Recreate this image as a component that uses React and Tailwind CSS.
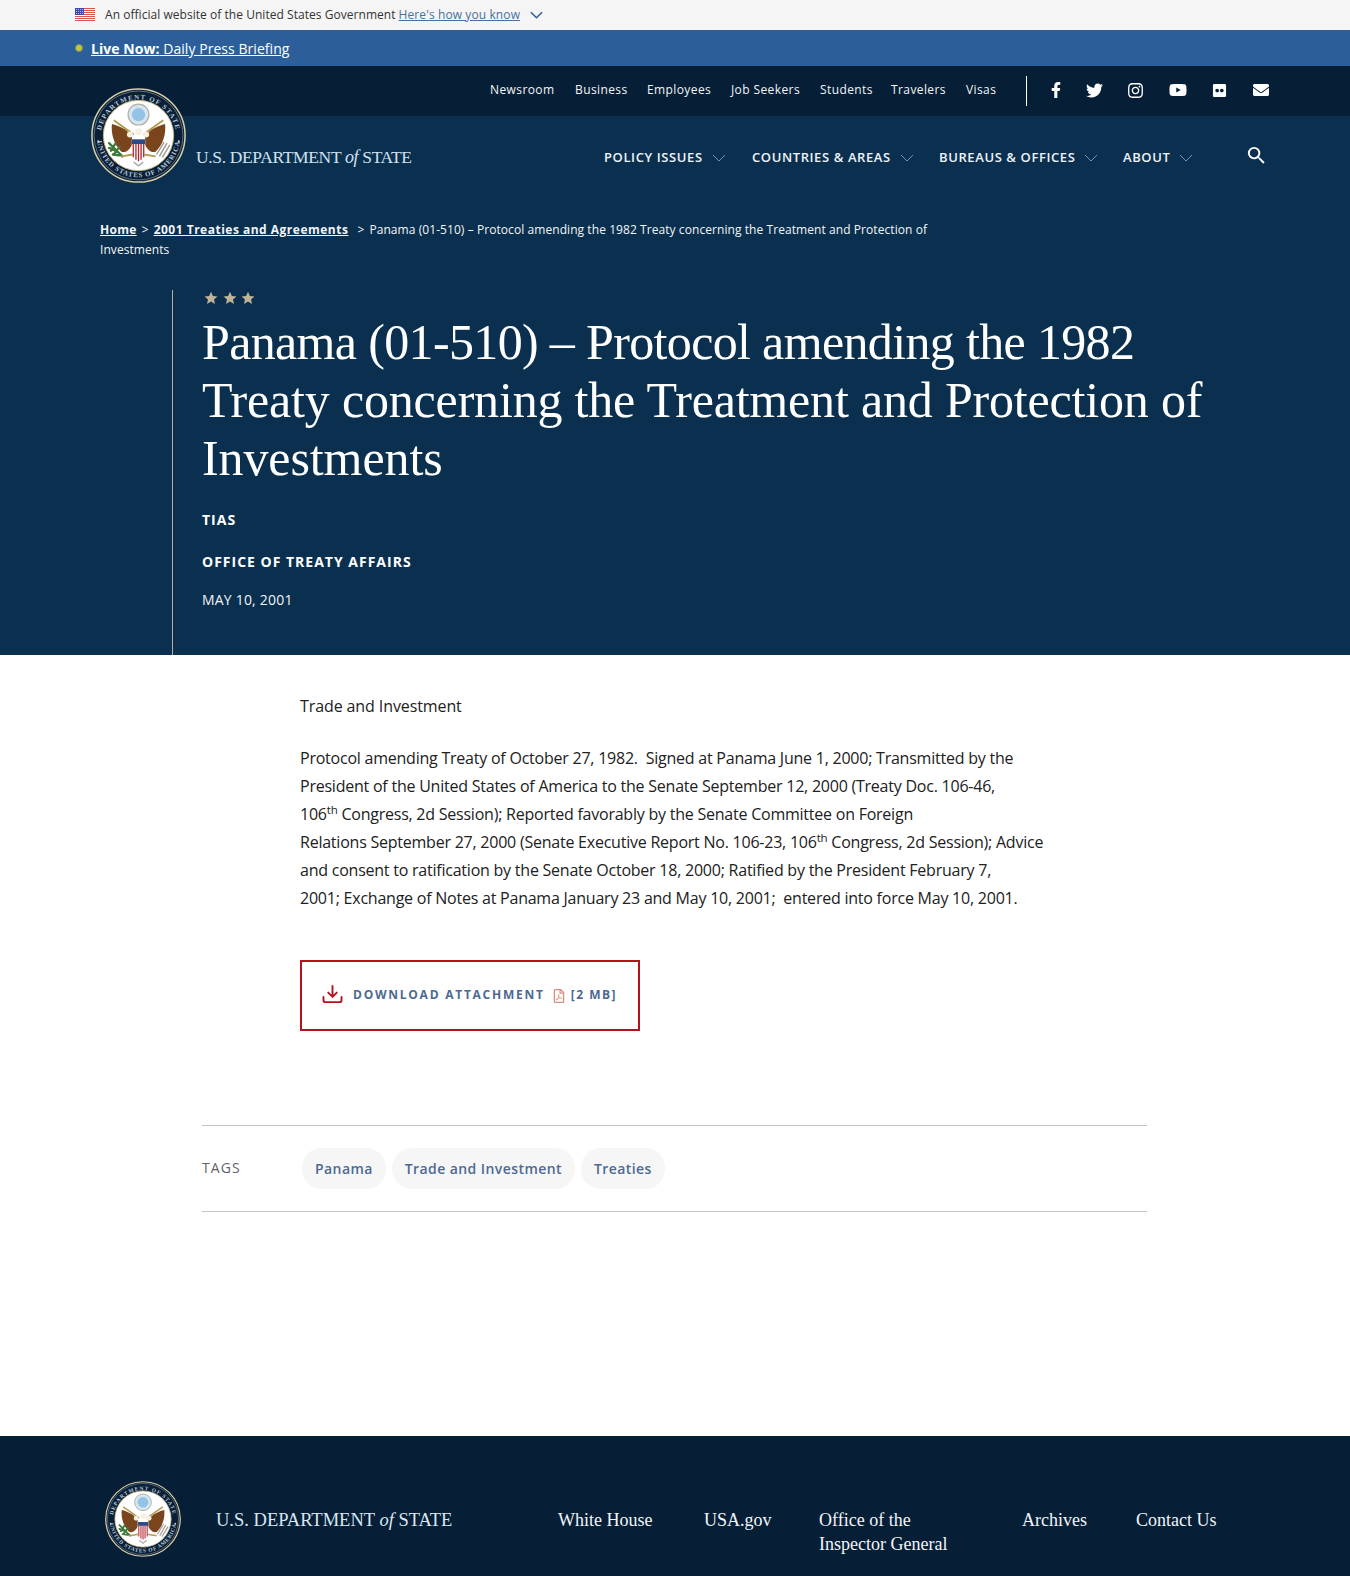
import React, { useId } from "react";
import { FaFacebookF, FaTwitter, FaInstagram, FaYoutube, FaFlickr, FaEnvelope, FaRegFilePdf } from "react-icons/fa";
import { MdSearch } from "react-icons/md";

const sans = "font-['Open_Sans',sans-serif]";
const serif = "font-['Liberation_Serif',serif]";

function Seal({ className }) {
  const id = useId().replace(/:/g, "");
  return (
    <svg viewBox="0 0 100 100" className={className}>
      <defs>
        <path id={id + "t"} d="M 10 52 A 40 40 0 0 1 90 52" />
        <path id={id + "b"} d="M 6 50 A 44 44 0 0 0 94 50" />
      </defs>
      <circle cx="50" cy="50" r="49" fill="#0a2038" stroke="#d9cfa6" strokeWidth="1.6" />
      <circle cx="50" cy="50" r="46.8" fill="none" stroke="#f4f0dc" strokeWidth="0.4" />
      <circle cx="50" cy="50" r="37" fill="#fff" stroke="#c9b983" strokeWidth="1" />
      <text fontSize="7.2" fontWeight="700" fontFamily="Liberation Serif, serif" fill="#b9c9da" letterSpacing="1.3">
        <textPath href={`#${id}t`} startOffset="50%" textAnchor="middle">DEPARTMENT OF STATE</textPath>
      </text>
      <text fontSize="7.2" fontWeight="700" fontFamily="Liberation Serif, serif" fill="#b9c9da" letterSpacing="0.9">
        <textPath href={`#${id}b`} startOffset="50%" textAnchor="middle">UNITED STATES OF AMERICA</textPath>
      </text>
      <circle cx="7.6" cy="56" r="1.1" fill="#c5d3e2" />
      <circle cx="92.4" cy="56" r="1.1" fill="#c5d3e2" />
      <path d="M24 34 L45 49 M76 34 L55 49" stroke="#b39a4e" strokeWidth="2" />
      <circle cx="50" cy="28" r="11" fill="#d5e5f2" stroke="#aeb0a0" strokeWidth="1.2" />
      <circle cx="50" cy="28" r="7" fill="#94c3e6" />
      <path d="M43 50 C36 43 30 40 22 38 C21 48 24 60 32 67 C37 69 41 64 43 60 Z" fill="#7a451c" />
      <path d="M57 50 C64 43 70 40 78 38 C79 48 76 60 68 67 C63 69 59 64 57 60 Z" fill="#7a451c" />
      <circle cx="41" cy="49" r="3.2" fill="#f5f0e2" />
      <circle cx="58" cy="49" r="3.2" fill="#f5f0e2" />
      <circle cx="50" cy="46" r="3.6" fill="#f5f0e2" />
      <path d="M43 54 H57 V68 C57 73 53 76 50 77 C47 76 43 73 43 68 Z" fill="#fff" />
      <path d="M43 54 H57 V59 H43 Z" fill="#2b4a86" />
      <path d="M44.5 59 V73 M47.3 59 V75.5 M50 59 V77 M52.7 59 V75.5 M55.5 59 V73" stroke="#b3282f" strokeWidth="1.4" />
      <path d="M19 58 L33 72 M21 66 L26 58 M24 70 L30 62 M26 66 L19 63 M30 71 L23 70" stroke="#3f7a3c" strokeWidth="2.4" strokeLinecap="round" />
      <path d="M72 72 L80 58 M69 70 L77 57 M75 73 L83 60" stroke="#9a9a8e" strokeWidth="1.5" />
      <path d="M32 72 L44 70 M68 72 L56 70" stroke="#b49a4d" strokeWidth="2" />
      <path d="M45 78 L50 82 L55 78" stroke="#aaa" strokeWidth="1.5" fill="none" />
    </svg>
  );
}

function Flag() {
  return (
    <svg viewBox="0 0 20 13" className="w-5 h-[13px] shrink-0">
      <rect width="20" height="13" fill="#fff" />
      {[0, 2, 4, 6, 8, 10, 12].map((y) => (
        <rect key={y} y={y} width="20" height="1" fill="#d9534f" />
      ))}
      <rect width="9" height="7" fill="#3a4aa8" />
      <path d="M1 1.5h7M1 3.5h7M1 5.5h7" stroke="#cfd6f0" strokeWidth="0.8" strokeDasharray="1 1" />
    </svg>
  );
}

function Chevron({ className }) {
  return (
    <svg viewBox="0 0 14 8" className={className} fill="none" stroke="currentColor" strokeWidth="1">
      <path d="M1 1l6 6 6-6" />
    </svg>
  );
}

function Stars() {
  return (
    <div className="ml-[2px] flex gap-[4.5px] h-[14px] items-center">
      {[0, 1, 2].map((i) => (
        <svg key={i} viewBox="0 0 20 20" className="w-[14px] h-[14px]" fill="#bfb49a">
          <path d="M10 1l2.7 6 6.5.7-4.9 4.3 1.4 6.4L10 15.1 4.3 18.4l1.4-6.4L.8 7.7 7.3 7z" />
        </svg>
      ))}
    </div>
  );
}

const topLinks = [
  ["Newsroom", "w-[85px]"],
  ["Business", "w-[72px]"],
  ["Employees", "w-[84px]"],
  ["Job Seekers", "w-[89px]"],
  ["Students", "w-[71px]"],
  ["Travelers", "w-[75px]"],
  ["Visas", "w-[60px]"],
];

const socials = [
  [FaFacebookF, "text-[16px]", "w-[35px]"],
  [FaTwitter, "text-[17px]", "w-[42px]"],
  [FaInstagram, "text-[17px]", "w-[41px]"],
  [FaYoutube, "text-[18px]", "w-[43px]"],
  [FaFlickr, "text-[15px]", "w-[41px]"],
  [FaEnvelope, "text-[16px]", "w-[41px]"],
];

const mainNav = [
  ["POLICY ISSUES", "w-[148px]"],
  ["COUNTRIES & AREAS", "w-[187px]"],
  ["BUREAUS & OFFICES", "w-[184px]"],
  ["ABOUT", "w-[100px]"],
];

const footerLinks = [
  ["White House", "w-[146px]"],
  ["USA.gov", "w-[115px]"],
  ["Office of the", "w-[203px]", "Inspector General"],
  ["Archives", "w-[114px]"],
  ["Contact Us", "w-[110px]"],
];

export default function App() {
  return (
    <div className={`${sans} w-[1350px] h-[1576px] flex flex-col bg-white text-[#212121] overflow-hidden`}>
      <div className="h-[30px] bg-[#f5f5f5] flex items-center pl-[75px]">
        <div className="-mt-[2px]"><Flag /></div>
        <span className="ml-[10px] text-[12px] tracking-[0.04px] text-[#333]">An official website of the United States Government</span>
        <a className="ml-[3px] text-[12px] tracking-[0.1px] text-[#4a6f9e] underline">Here's how you know</a>
        <Chevron className="ml-[10px] w-[13px] h-[8px] text-[#2d5f9a] stroke-[1.6]" />
      </div>

      <div className="h-[36px] bg-[#2c5f9a] flex items-center pl-[75px] text-white text-[14px] tracking-[0.05px]">
        <span className="w-[8px] h-[8px] rounded-full bg-[#c9c23c] border border-[#6f9a6a] mr-[8px]" />
        <a className="underline"><b className="font-bold">Live Now:</b> Daily Press Briefing</a>
      </div>

      <div className="relative flex-none h-[589px] bg-[#0b304f] text-white">
        <div className="h-[50px] bg-[#061f36] flex items-center pl-[490px]">
          {topLinks.map(([t, w]) => (
            <a key={t} className={`${w} text-[12px] tracking-[0.4px] text-[#f2f5f8] -mt-[2px]`}>{t}</a>
          ))}
          <span className="w-px h-[30px] bg-white" />
          <div className="ml-[11px] flex items-center -mt-[2px]">
            {socials.map(([Icon, size, w], i) => (
              <span key={i} className={`${w} flex justify-center`}>
                <Icon className={size} />
              </span>
            ))}
          </div>
        </div>

        <div className="absolute left-[91px] top-[22px] w-[95px] h-[95px]"><Seal className="w-full h-full" /></div>

        <div className="h-[83px] flex items-center pl-[196px]">
          <span className={`${serif} w-[408px] text-[17.5px] tracking-[-0.35px] text-[#cfe2f0]`}>
            U.S. DEPARTMENT <i className="text-[18px]">of</i> STATE
          </span>
          {mainNav.map(([t, w]) => (
            <span key={t} className={`${w} flex items-center text-[13px] font-semibold tracking-[0.6px] text-[#eef3f8]`}>
              {t}
              <Chevron className="ml-[9px] w-[14px] h-[8px] text-[#6f93b3]" />
            </span>
          ))}
          <MdSearch className="ml-[22px] -mt-[5px] text-[23px] text-white" />
        </div>

        <div className="pl-[100px] mt-[21px] w-[960px] text-[12px] leading-[20px] text-[#f2f5f8] h-[70px] tracking-[0.07px]">
          <a className="font-bold underline tracking-[0.3px]">Home</a>
          <span className="mx-[5px]">&gt;</span>
          <a className="font-bold underline tracking-[0.5px]">2001 Treaties and Agreements</a>
          <span className="ml-[9px] mr-[5px]">&gt;</span>
          <span>Panama (01-510) – Protocol amending the 1982 Treaty concerning the Treatment and Protection of</span>
          <br />
          <span>Investments</span>
        </div>

        <div className="ml-[172px] border-l border-[#b8ae8f] pl-[29px] h-[365px] pt-[1px]">
          <Stars />
          <h1 className={`${serif} mt-[8px] w-[1050px] text-[50px] leading-[58px] font-normal text-white`}>
            <span className="block tracking-[-0.65px]">Panama (01-510) – Protocol amending the 1982</span>
            <span className="block tracking-[-0.18px]">Treaty concerning the Treatment and Protection of</span>
            <span className="block tracking-[-0.1px]">Investments</span>
          </h1>
          <div className="mt-[23px] text-[14px] leading-[20px] font-bold tracking-[1px]">TIAS</div>
          <div className="mt-[22px] text-[14px] leading-[20px] font-bold tracking-[1px]">OFFICE OF TREATY AFFAIRS</div>
          <div className="mt-[18px] text-[14px] leading-[20px] tracking-[0.2px] text-[#eef3f8]">MAY 10, 2001</div>
        </div>
      </div>

      <div className="flex-1">
        <div className="ml-[300px] w-[760px] pt-[37px] text-[16px] leading-[28px] tracking-[-0.23px] text-[#212121]">
          <p className="tracking-[-0.1px]">Trade and Investment</p>
          <p className="mt-[24px] w-[750px]">
            Protocol amending Treaty of October 27, 1982.&nbsp; Signed at Panama June 1, 2000; Transmitted by the<br />
            President of the United States of America to the Senate September 12, 2000 (Treaty Doc. 106-46,<br />
            106<sup className="text-[11.5px] leading-none">th</sup> Congress, 2d Session); Reported favorably by the Senate Committee on Foreign<br />
            Relations September 27, 2000 (Senate Executive Report No. 106-23, 106<sup className="text-[11.5px] leading-none">th</sup> Congress, 2d Session); Advice<br />
            and consent to ratification by the Senate October 18, 2000; Ratified by the President February 7,<br />
            2001; Exchange of Notes at Panama January 23 and May 10, 2001;&nbsp; entered into force May 10, 2001.
          </p>
        </div>

        <a className="ml-[300px] mt-[48px] w-[340px] h-[71px] border-2 border-[#b5121b] flex items-center pl-[20px] text-[12px] font-bold tracking-[1.75px] text-[#4c6a92]">
          <svg viewBox="0 0 22 20" className="w-[21px] h-[19px] -mt-[3px] shrink-0" fill="none" stroke="#b5121b" strokeWidth="2" strokeLinecap="round" strokeLinejoin="round">
            <path d="M11 1v11M6.5 8l4.5 4.5L15.5 8" />
            <path d="M1.5 12.5v3.5a2 2 0 0 0 2 2h15a2 2 0 0 0 2-2v-3.5" />
          </svg>
          <span className="ml-[10px] -mt-[2px]">DOWNLOAD ATTACHMENT</span>
          <FaRegFilePdf className="ml-[7px] text-[14px] text-[#d9907f]" />
          <span className="ml-[5px] -mt-[2px] tracking-[1.5px]">[2 MB]</span>
        </a>

        <div className="ml-[202px] mt-[94px] w-[945px] h-[87px] border-y border-[#c4c4c4] flex items-center">
          <span className="w-[100px] text-[14px] tracking-[1.1px] text-[#5f6368] -mt-[2px]">TAGS</span>
          <div className="flex gap-[6px]">
            {["Panama", "Trade and Investment", "Treaties"].map((t) => (
              <span key={t} className="h-[41px] px-[13px] rounded-[20px] bg-[#f6f6f7] flex items-center text-[14px] font-semibold tracking-[0.42px] text-[#4c6a92]">{t}</span>
            ))}
          </div>
        </div>
      </div>

      <div className="h-[140px] bg-[#061f36] flex items-start text-white">
        <div className="ml-[105px] mt-[45px] w-[76px] h-[76px] shrink-0"><Seal className="w-full h-full" /></div>
        <span className={`${serif} ml-[35px] mt-[72px] w-[342px] shrink-0 text-[18.5px] leading-[24px] text-[#d8e7f2]`}>
          U.S. DEPARTMENT <i>of</i> STATE
        </span>
        <div className={`${serif} mt-[72px] flex text-[18px] leading-[24px] text-[#f2f5f8]`}>
          {footerLinks.map(([t, w, second]) => (
            <a key={t} className={`${w} pr-[24px]`}>
              <span className="block">{t}</span>
              {second && <span className="block">{second}</span>}
            </a>
          ))}
        </div>
      </div>
    </div>
  );
}
